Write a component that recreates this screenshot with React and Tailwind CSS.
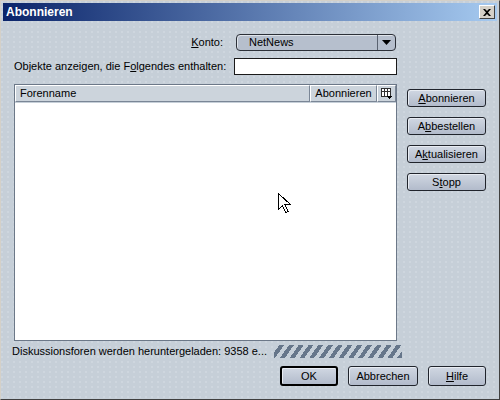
import React from "react";

const font = { fontFamily: '"Liberation Sans", Arial, sans-serif' };

function Btn({ children, w = "w-[79px]", isDefault = false, className = "" }) {
  return (
    <div
      className={`${w} h-[18px] flex items-center justify-center rounded-[3px] ${
        isDefault ? "border-2 border-black h-[20px]" : "border border-[#20242c]"
      } bg-[linear-gradient(#d0d7e2,#b2bbcb)] text-[11px] text-black shadow-[inset_1px_1px_0_#e8ecf2] ${className}`}
    >
      {children}
    </div>
  );
}

function U({ children }) {
  return <span className="underline underline-offset-1">{children}</span>;
}

function Cursor() {
  return (
    <svg className="absolute left-[277px] top-[192px]" width="14" height="21" viewBox="0 0 14 21">
      <path
        d="M0.5 0.5 L0.5 16.5 L4.5 12.5 L7.5 19.5 L10 18.5 L7 11.5 L12.5 11.5 Z"
        fill="#fff"
        stroke="#000"
        strokeWidth="1"
        shapeRendering="crispEdges"
      />
    </svg>
  );
}

export default function App() {
  return (
    <div
      className="relative w-[500px] h-[400px] overflow-hidden bg-[#c6cfd8] border border-t-[#d4d0c8] border-l-[#d4d0c8] border-r-[#404040] border-b-[#404040]"
      style={font}
    >
      <div className="absolute inset-0 bg-[radial-gradient(circle_at_1px_1px,#d8dee5_0.5px,transparent_0.9px)] bg-[length:6px_5px] pointer-events-none" />
      <div className="relative flex flex-col h-full px-[2px] pt-[2px]">
        {/* title bar */}
        <div className="h-[18px] flex items-center justify-between pl-[3px] pr-[2px] bg-[linear-gradient(90deg,#0a246a,#a6caf0)]">
          <span className="text-white font-bold text-[12px]">Abonnieren</span>
          <div className="w-[16px] h-[14px] bg-[#d4d0c8] flex items-center justify-center border border-t-white border-l-white border-r-[#404040] border-b-[#404040]">
            <svg width="8" height="7" viewBox="0 0 8 7">
              <path d="M0 0 L2 0 L4 2 L6 0 L8 0 L5 3.5 L8 7 L6 7 L4 5 L2 7 L0 7 L3 3.5 Z" fill="#000" />
            </svg>
          </div>
        </div>

        <div className="flex flex-col pl-[11px] pr-[11px]">
          {/* Konto row */}
          <div className="flex items-center mt-[13px] h-[17px]">
            <div className="w-[209px] text-right text-[11px] whitespace-nowrap">
              <U>K</U>onto:
            </div>
            <div className="ml-[13px] w-[160px] h-[17px] flex rounded-[4px] border border-[#2c3038] bg-[#b6bfcd] shadow-[inset_1px_1px_0_#dfe4ea]">
              <div className="flex-1 pl-[12px] text-[11px] leading-[15px]">NetNews</div>
              <div className="w-[18px] border-l border-[#5a6270] flex items-center justify-center">
                <svg width="9" height="5" viewBox="0 0 9 5">
                  <path d="M0 0 L9 0 L4.5 5 Z" fill="#000" />
                </svg>
              </div>
            </div>
          </div>

          {/* search row */}
          <div className="flex items-center mt-[7px] h-[17px]">
            <div className="w-[209px] text-right text-[11px] whitespace-nowrap">
              Objekte anzeigen, die F<U>o</U>lgendes enthalten:
            </div>
            <div className="ml-[11px] w-[163px] h-[17px] bg-white border border-[#1a1a1a]" />
          </div>

          {/* list + buttons */}
          <div className="flex mt-[9px]">
            <div className="w-[383px] h-[257px] bg-white border border-[#6c7888] flex flex-col">
              <div className="flex h-[18px] text-[11px] bg-[#ccd4dc] border-b border-[#c6cfd8]">
                <div className="flex-1 pl-[4px] flex items-center border border-t-white border-l-white border-r-[#7a8696] border-b-[#7a8696]">
                  Forenname
                </div>
                <div className="w-[67px] flex items-center justify-center border border-t-white border-l-white border-r-[#7a8696] border-b-[#7a8696]">
                  Abonnieren
                </div>
                <div className="w-[19px] flex items-center justify-center border border-t-white border-l-white border-r-[#7a8696] border-b-[#7a8696]">
                  <svg width="11" height="11" viewBox="0 0 11 11" shapeRendering="crispEdges">
                    <rect x="0.5" y="0.5" width="9" height="8" fill="#fff" stroke="#303030" />
                    <path d="M0.5 3.5 H9.5 M3.5 0.5 V8.5 M6.5 0.5 V8.5" stroke="#303030" />
                    <path d="M5 8 L11 8 L8 11 Z" fill="#000" />
                  </svg>
                </div>
              </div>
            </div>

            <div className="ml-[10px] flex flex-col pt-[5px] gap-[10px]">
              <Btn>
                <U>A</U>bonnieren
              </Btn>
              <Btn>
                A<U>b</U>bestellen
              </Btn>
              <Btn>
                A<U>k</U>tualisieren
              </Btn>
              <Btn>
                S<U>t</U>opp
              </Btn>
            </div>
          </div>

          {/* status row */}
          <div className="flex items-center mt-[2px] h-[17px]">
            <div className="w-[262px] text-[11px] -ml-[2px] whitespace-nowrap overflow-hidden">
              Diskussionsforen werden heruntergeladen: 9358 e...
            </div>
            <div className="w-[128px] h-[13px] bg-[repeating-linear-gradient(-55deg,#66768a_0_4px,#c6cfd8_4px_8px)]" />
          </div>

          {/* bottom buttons */}
          <div className="flex justify-end mt-[6px] gap-[10px]">
            <Btn w="w-[58px]" isDefault>OK</Btn>
            <Btn w="w-[70px]" className="h-[20px]">Abbrechen</Btn>
            <Btn w="w-[58px]" className="h-[20px]">
              <U>H</U>ilfe
            </Btn>
          </div>
        </div>
      </div>
      <Cursor />
    </div>
  );
}
